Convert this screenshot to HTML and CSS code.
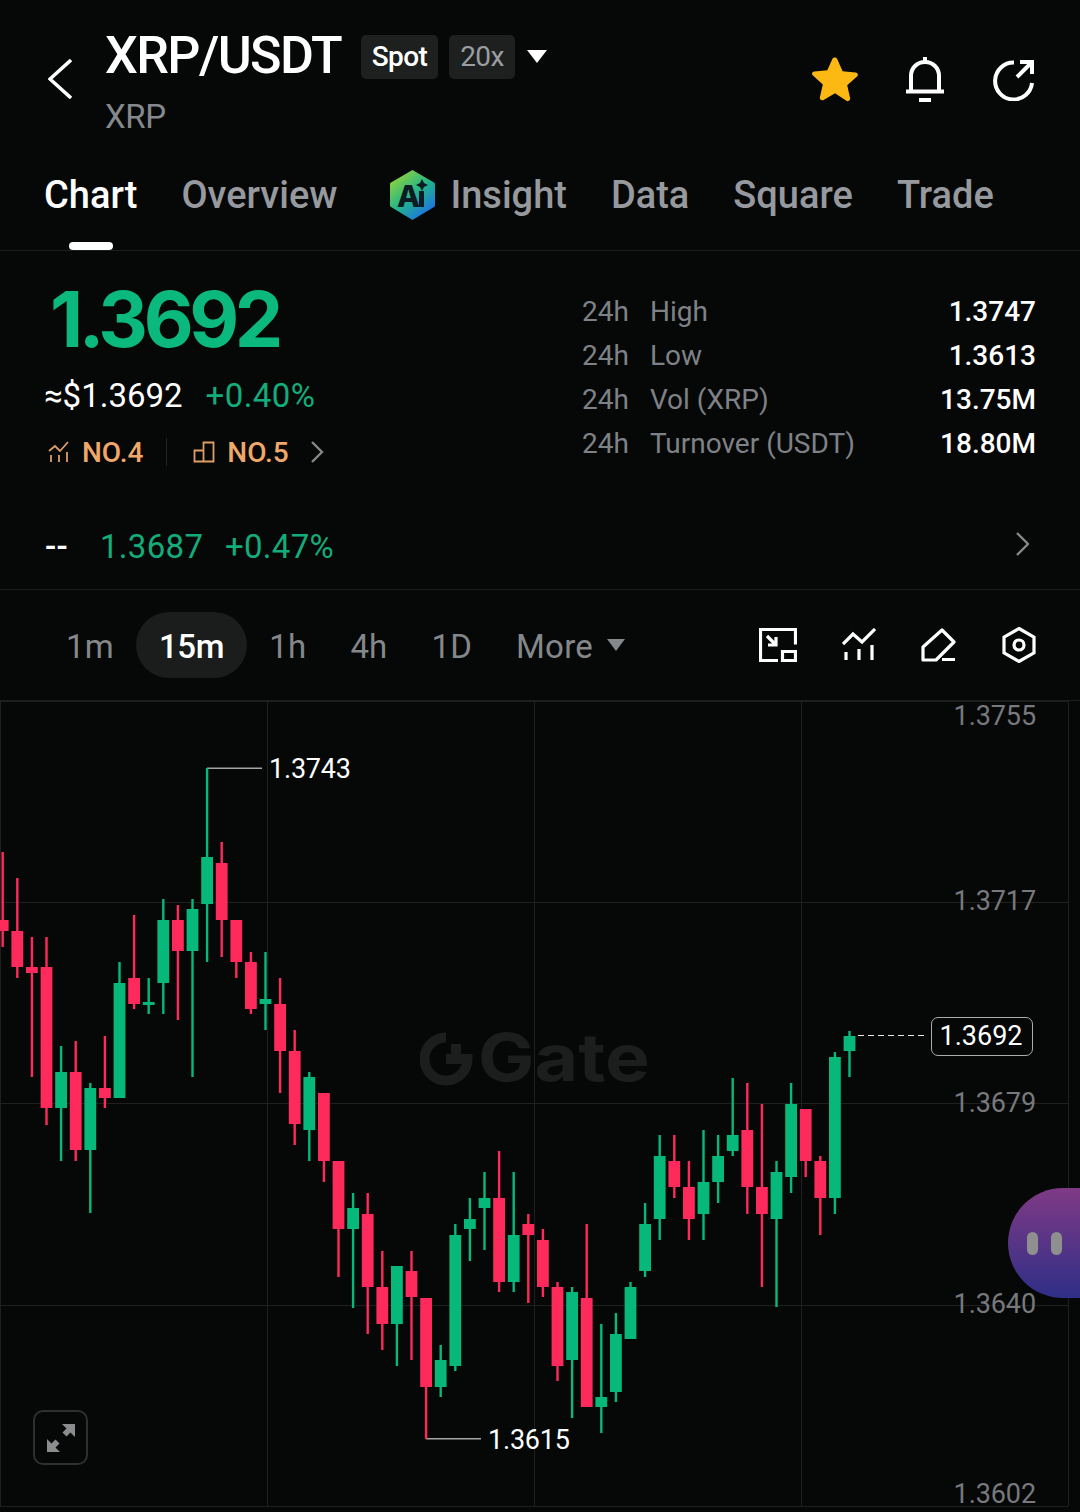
FILE: index.html
```html
<!DOCTYPE html>
<html lang="en">
<head>
<meta charset="UTF-8" />
<meta name="viewport" content="width=device-width, initial-scale=1" />
<title>XRP/USDT</title>
<link rel="stylesheet" href="styles.css">
</head>
<body>
<div class="page">

  <div class="top-bar">
    <svg class="back-icon" width="24" height="40" viewBox="0 0 24 40"><polyline points="23,1 2,20 23,39" /></svg>
    <div class="pair">
      <div class="pair-line">
        <span class="pair-name">XRP/USDT</span>
        <span class="tag tag-spot">Spot</span>
        <span class="tag tag-lev">20x</span>
        <span class="caret caret-lg"></span>
      </div>
      <div class="pair-sub">XRP</div>
    </div>
    <div class="top-actions">
      <svg class="star-icon" width="48" height="46" viewBox="0 0 48 46"><path d="M24 1.500c1 0 1.800.6 2.300 1.700l5.300 12 13 1.300c2.300.2 3 2.700 1.400 4.100l-9.800 8.700 2.900 12.800c.5 2.200-1.800 3.800-3.700 2.700L24 37.200l-11.400 6.700c-1.900 1.100-4.200-.5-3.700-2.700l2.900-12.800L2 19.600C.3 18.200 1.100 15.700 3.300 15.500l13-1.300 5.400-12C22.200 2.100 23 1.500 24 1.500z" fill="#fcb813"/></svg>
      <svg width="40" height="46" viewBox="0 0 40 46" class="line-icon"><path d="M1 35.500h38M6 35.500V20C6 12 12 6 20 6s14 6 14 14v15.500M20 6V1M14 44h12"/></svg>
      <svg width="42" height="42" viewBox="0 0 42 42" class="line-icon share-icon"><path d="M39 24A18.500 18.500 0 1 1 21 3.500M24 18L38 4M27 3h12v12"/></svg>
    </div>
  </div>

  <div class="tabs">
    <span class="tab tab-active">Chart</span>
    <span class="tab">Overview</span>
    <span class="tab tab-ai">
      <svg width="47" height="52" viewBox="0 0 47 52">
        <defs>
          <linearGradient id="aiGrad" x1="0.15" y1="0.1" x2="0.8" y2="0.95">
            <stop offset="0" stop-color="#8ad23f"/>
            <stop offset="0.5" stop-color="#22b58a"/>
            <stop offset="1" stop-color="#1d6fe8"/>
          </linearGradient>
        </defs>
        <path d="M23.500 1L45 13.500a2 2 0 0 1 1 2V36a2 2 0 0 1-1 2L23.500 51 2 38a2 2 0 0 1-1-2V15.500a2 2 0 0 1 1-2z" fill="url(#aiGrad)"/>
        <text x="8" y="38" class="ai-letter">A</text>
        <rect x="30" y="22" width="5" height="16" fill="#0c1c22"/>
        <path d="M33 10l2 4 4 2-4 2-2 4-2-4-4-2 4-2z" fill="#0c1c22"/>
      </svg>
      Insight
    </span>
    <span class="tab">Data</span>
    <span class="tab">Square</span>
    <span class="tab">Trade</span>
    <span class="tab-marker"></span>
  </div>

  <div class="summary">
    <div class="summary-left">
      <div class="last-price">1.3692</div>
      <div class="price-line">
        <span class="usd">≈$1.3692</span>
        <span class="change">+0.40%</span>
      </div>
      <div class="rank-line">
        <svg width="22" height="22" viewBox="0 0 22 22" class="rank-icon"><path d="M1 10l6-5 5 5 8-9M3 14v7M11 14v7M19 11v10"/></svg>
        <span class="rank">NO.4</span>
        <span class="rank-sep"></span>
        <svg width="22" height="22" viewBox="0 0 22 22" class="rank-icon"><path d="M1.500 9.500h9v11h-9zM10.500 20.500V1.500h10v19h-10"/></svg>
        <span class="rank">NO.5</span>
        <svg width="14" height="22" viewBox="0 0 14 22" class="chevron"><polyline points="2,1 12,11 2,21"/></svg>
      </div>
    </div>
    <div class="stats">
      <div class="stat"><span class="stat-h">24h</span><span class="stat-name">High</span><span class="stat-val">1.3747</span></div>
      <div class="stat"><span class="stat-h">24h</span><span class="stat-name">Low</span><span class="stat-val">1.3613</span></div>
      <div class="stat"><span class="stat-h">24h</span><span class="stat-name">Vol (XRP)</span><span class="stat-val">13.75M</span></div>
      <div class="stat"><span class="stat-h">24h</span><span class="stat-name">Turnover (USDT)</span><span class="stat-val">18.80M</span></div>
    </div>
  </div>

  <div class="index-row">
    <span class="dashes">--</span>
    <span class="index-price">1.3687</span>
    <span class="index-change">+0.47%</span>
    <svg width="14" height="24" viewBox="0 0 14 24" class="chevron index-chevron"><polyline points="2,1 13,12 2,23"/></svg>
  </div>

  <div class="toolbar">
    <span class="period">1m</span>
    <span class="period period-active">15m</span>
    <span class="period">1h</span>
    <span class="period">4h</span>
    <span class="period">1D</span>
    <span class="period period-more">More<span class="caret caret-sm"></span></span>
    <div class="tools">
      <svg width="38" height="34" viewBox="0 0 38 34" class="line-icon thin"><path d="M19 32.500H1.500V1.500h35v15M8 8l9 9M17 9v8H9M23.500 23.500h13v9h-13z"/></svg>
      <svg width="34" height="34" viewBox="0 0 34 34" class="line-icon thin"><path d="M1 16l10-10 9 8L33 1M4 24v8M17 21v11M30 17v15"/></svg>
      <svg width="36" height="34" viewBox="0 0 36 34" class="line-icon thin round"><path d="M21 2l12 12-18 18H2V19zM21 31.500h13"/></svg>
      <svg width="34" height="36" viewBox="0 0 34 36" class="line-icon thin"><path d="M17 1.500l15 8.700v15.600l-15 8.700-15-8.700V10.200z"/><circle cx="17" cy="18" r="5"/></svg>
    </div>
  </div>

  <div class="chart">
    <svg id="chartSvg" class="chart-svg" width="1080" height="806" viewBox="0 701 1080 806"></svg>

    <div class="watermark">
      <svg width="54" height="54" viewBox="0 0 54 54"><path d="M26 5.500A21.500 21.500 0 1 0 47.500 27H26" class="wm-ring"/><rect x="31" y="12" width="10" height="13" fill="#1c1d1d"/></svg>
      <span class="wm-text">Gate</span>
    </div>

    <span class="axis-label axis-1">1.3755</span>
    <span class="axis-label axis-2">1.3717</span>
    <span class="axis-label axis-3">1.3679</span>
    <span class="axis-label axis-4">1.3640</span>
    <span class="axis-label axis-5">1.3602</span>

    <span class="mark mark-high">1.3743</span>
    <span class="mark mark-low">1.3615</span>
    <span class="now-price">1.3692</span>

    <div class="assistant"><span class="eye"></span><span class="eye"></span></div>

    <div class="expand">
      <svg width="30" height="30" viewBox="0 0 30 30"><path d="M29 1v13l-4.500-4.500-4 4-4-4 4-4L16 1zM1 29V16l4.500 4.500 4-4 4 4-4 4L14 29z" fill="#8a8c8d"/></svg>
    </div>
  </div>

</div>
<script src="chart.js"></script>
</body>
</html>
```

FILE: styles.css
```css
* {
  box-sizing: border-box;
}
body {
  margin: 0;
  background: #060707;
  color: white;
  font-family: Roboto, sans-serif;
}
.page {
  width: 1080px;
  height: 1512px;
  overflow: hidden;
}

/* top bar */
.top-bar {
  height: 150px;
  display: flex;
  padding: 0 45px 0 48px;
}
.back-icon {
  margin-top: 59px;
  fill: none;
  stroke: white;
  stroke-width: 3.5;
}
.pair {
  margin-left: 33px;
  padding-top: 25px;
}
.pair-line {
  display: flex;
  align-items: center;
  height: 60px;
}
.pair-name {
  font-size: 52px;
  font-weight: 500;
  letter-spacing: -1.6px;
  width: 256px;
}
.tag {
  height: 44px;
  line-height: 44px;
  margin-top: 4px;
  border-radius: 5px;
  background: #1e2020;
  font-size: 28px;
  letter-spacing: -0.6px;
  text-align: center;
}
.tag-spot {
  width: 77px;
  font-weight: 500;
}
.tag-lev {
  width: 66px;
  margin-left: 11px;
  color: #9a9ea2;
}
.caret {
  display: inline-block;
  width: 0;
  height: 0;
  border-left-style: solid;
  border-right-style: solid;
  border-top-style: solid;
  border-left-color: transparent;
  border-right-color: transparent;
}
.caret-lg {
  margin-left: 12px;
  margin-bottom: -3px;
  border-width: 13px 10px 0;
  border-top-color: white;
}
.pair-sub {
  margin-top: 14px;
  font-size: 33px;
  line-height: 36px;
  color: #85898d;
  letter-spacing: -0.4px;
}
.top-actions {
  margin-left: auto;
  padding-top: 56px;
  display: flex;
  align-items: flex-start;
  gap: 48px;
}
.star-icon {
  margin-right: -2px;
}
.share-icon {
  margin-top: 3px;
}
.line-icon {
  fill: none;
  stroke: white;
  stroke-width: 4;
}
.line-icon.thin {
  stroke-width: 3.2;
}
.line-icon.round {
  stroke-linejoin: round;
}

/* tabs */
.tabs {
  position: relative;
  height: 101px;
  padding: 0 0 10px 44px;
  display: flex;
  align-items: center;
  gap: 44px;
  border-bottom: 1px solid #1c1d1d;
}
.tab {
  font-size: 38px;
  font-weight: 500;
  color: #96999d;
  display: flex;
  align-items: center;
  gap: 14px;
}
.tab-active {
  color: white;
}
.tab-ai {
  margin-left: 8px;
}
.ai-letter {
  font-family: Inter, sans-serif;
  font-size: 30px;
  font-weight: 800;
  fill: #0c1c22;
}
.tab-marker {
  position: absolute;
  left: 69px;
  bottom: 0;
  width: 44px;
  height: 8px;
  border-radius: 4px;
  background: white;
}

/* price summary */
.summary {
  height: 238px;
  display: flex;
  justify-content: space-between;
  padding: 0 44px 0 45px;
}
.last-price {
  margin-top: 28px;
  padding-left: 5px;
  font-family: Inter, sans-serif;
  font-size: 77px;
  line-height: 80px;
  font-weight: 700;
  letter-spacing: -4.4px;
  color: #0bb87e;
}
.price-line {
  margin-top: 18px;
  display: flex;
  gap: 23px;
  font-size: 33px;
  line-height: 38px;
  margin-left: -1px;
}
.change {
  color: #13ad7b;
  letter-spacing: 0.4px;
}
.rank-line {
  margin-top: 19px;
  display: flex;
  align-items: center;
  height: 36px;
  font-size: 28px;
  font-weight: 500;
  color: #f0a868;
}
.rank-icon {
  fill: none;
  stroke: #df9d66;
  stroke-width: 1.8;
  margin-left: 3px;
}
.rank {
  margin-left: 12px;
}
.rank-sep {
  width: 1px;
  height: 28px;
  margin: 0 23px;
  background: #222323;
}
.chevron {
  fill: none;
  stroke: #85888b;
  stroke-width: 2.4;
}
.rank-line .chevron {
  margin-left: 21px;
}
.stats {
  width: 454px;
  padding-top: 38px;
}
.stat {
  display: flex;
  height: 44px;
  align-items: center;
  font-size: 28px;
  color: #7e8286;
}
.stat-name {
  margin-left: 21px;
}
.stat-val {
  margin-left: auto;
  color: white;
  font-weight: 500;
}

/* index row */
.index-row {
  height: 101px;
  padding: 14px 51px 0 45px;
  display: flex;
  align-items: center;
  font-size: 33px;
  letter-spacing: 0.3px;
  border-bottom: 1px solid #1c1d1d;
}
.dashes {
  width: 55px;
  font-weight: 500;
}
.index-price {
  color: #13ad7b;
  width: 125px;
}
.index-change {
  color: #13ad7b;
}
.index-chevron {
  margin-left: auto;
  margin-bottom: 4px;
}

/* period toolbar */
.toolbar {
  height: 111px;
  padding: 0 44px;
  display: flex;
  align-items: center;
  border-bottom: 1px solid #1c1d1d;
  font-size: 33px;
  letter-spacing: 0.2px;
  color: #85888b;
}
.period {
  padding: 0 22px;
  height: 66px;
  line-height: 70px;
}
.period-active {
  padding: 0 23px;
  background: #1b1c1c;
  border-radius: 33px;
  color: white;
  font-weight: 500;
  letter-spacing: -0.3px;
}
.period-more {
  display: flex;
  align-items: center;
  padding-top: 4px;
}
.caret-sm {
  margin-left: 14px;
  margin-bottom: 4px;
  border-width: 12px 9px 0;
  border-top-color: #85888b;
}
.tools {
  margin-left: auto;
  display: flex;
  align-items: center;
  gap: 45px;
}

/* chart */
.chart {
  position: relative;
  height: 811px;
}
.chart-svg {
  position: absolute;
  left: 0;
  top: 0;
}
.watermark {
  position: absolute;
  left: 420px;
  top: 331px;
  display: flex;
  align-items: center;
  gap: 4px;
}
.wm-ring {
  fill: none;
  stroke: #1c1d1d;
  stroke-width: 10;
}
.wm-text {
  font-family: Inter, sans-serif;
  font-size: 66px;
  font-weight: 700;
  line-height: 54px;
  margin-top: -4px;
  transform: scaleX(1.14);
  transform-origin: left center;
  color: #1c1d1d;
}
.axis-label {
  position: absolute;
  right: 44px;
  font-size: 27px;
  line-height: 34px;
  letter-spacing: -0.1px;
  color: #77797c;
}
.axis-1 { top: -2px; }
.axis-2 { top: 183px; }
.axis-3 { top: 385px; }
.axis-4 { top: 586px; }
.axis-5 { top: 776px; }
.mark {
  position: absolute;
  font-size: 27px;
  line-height: 34px;
  letter-spacing: -0.2px;
}
.mark-high {
  left: 269px;
  top: 51px;
}
.mark-low {
  left: 488px;
  top: 722px;
}
.now-price {
  position: absolute;
  left: 931px;
  top: 316px;
  width: 102px;
  height: 39px;
  line-height: 37px;
  padding-right: 2px;
  text-align: center;
  font-size: 27px;
  background: #060707;
  border: 1px solid #a9abac;
  border-radius: 7px;
}
.assistant {
  position: absolute;
  right: 0;
  top: 487px;
  width: 72px;
  height: 110px;
  border-radius: 55px 0 0 55px;
  background: linear-gradient(#7f3a85, #2f2f87);
  display: flex;
  align-items: center;
  justify-content: center;
  gap: 13px;
}
.eye {
  width: 11px;
  height: 23px;
  border-radius: 6px;
  background: #8f8f8f;
}
.expand {
  position: absolute;
  left: 33px;
  top: 709px;
  width: 55px;
  height: 55px;
  border: 2px solid #2e3030;
  border-radius: 10px;
  display: flex;
  align-items: center;
  justify-content: center;
}
```

FILE: chart.js
```js
// each candle: high, body top, body bottom, low, up?
const candles = [
  [852, 920, 931, 947, 0], [878, 931, 967, 978, 0], [937, 967, 973, 1077, 0], [937, 967, 1108, 1125, 0],
  [1046, 1072, 1108, 1161, 1], [1041, 1072, 1150, 1161, 0], [1083, 1088, 1150, 1213, 1], [1036, 1088, 1098, 1108, 0],
  [962, 983, 1098, 1098, 1], [915, 978, 1004, 1009, 0], [978, 1002, 1005, 1014, 1], [899, 920, 983, 1014, 1],
  [905, 920, 951, 1020, 0], [899, 909, 951, 1077, 1], [768, 857, 904, 962, 1], [842, 863, 920, 957, 0],
  [920, 920, 962, 978, 0], [952, 962, 1009, 1014, 0], [952, 999, 1004, 1030, 1], [978, 1004, 1051, 1093, 0],
  [1030, 1051, 1124, 1145, 0], [1072, 1077, 1130, 1161, 1], [1093, 1093, 1161, 1182, 0], [1161, 1161, 1229, 1277, 0],
  [1193, 1208, 1229, 1308, 1], [1193, 1214, 1287, 1334, 0], [1251, 1287, 1324, 1350, 0], [1266, 1266, 1324, 1366, 1],
  [1251, 1271, 1297, 1360, 0], [1298, 1298, 1387, 1439, 0], [1345, 1360, 1387, 1397, 1], [1224, 1235, 1366, 1371, 1],
  [1198, 1219, 1229, 1261, 1], [1172, 1198, 1208, 1250, 1], [1151, 1198, 1282, 1292, 0], [1172, 1235, 1282, 1292, 1],
  [1214, 1224, 1235, 1303, 0], [1229, 1240, 1287, 1297, 0], [1282, 1287, 1366, 1381, 0], [1287, 1292, 1360, 1418, 1],
  [1224, 1298, 1407, 1407, 0], [1324, 1397, 1407, 1433, 1], [1313, 1334, 1392, 1402, 1], [1282, 1287, 1339, 1339, 1],
  [1203, 1224, 1271, 1277, 1], [1135, 1156, 1219, 1240, 1], [1135, 1161, 1187, 1198, 0], [1161, 1187, 1219, 1240, 0],
  [1130, 1182, 1214, 1240, 1], [1135, 1156, 1182, 1203, 1], [1078, 1135, 1151, 1156, 1], [1083, 1130, 1187, 1214, 0],
  [1104, 1187, 1214, 1287, 0], [1161, 1172, 1219, 1307, 1], [1083, 1104, 1177, 1193, 1], [1109, 1109, 1161, 1177, 0],
  [1156, 1161, 1198, 1235, 0], [1052, 1057, 1198, 1214, 1], [1031, 1036, 1051, 1077, 1]
];

const svg = document.getElementById('chartSvg');
const GREEN = '#06b97b';
const RED = '#fe2a5b';
const NS = 'http://www.w3.org/2000/svg';

function add(tag, attrs) {
  const el = document.createElementNS(NS, tag);
  for (const k in attrs) el.setAttribute(k, attrs[k]);
  svg.appendChild(el);
}

// grid
[701, 902, 1103, 1305, 1506].forEach(y => {
  add('rect', { x: 0, y: y, width: 1068, height: 1, fill: '#1e1f1f' });
});
[0, 267, 534, 801, 1068].forEach(x => {
  add('rect', { x: x, y: 701, width: 1, height: 805, fill: '#1e1f1f' });
});

// high / low / last markers
add('rect', { x: 207, y: 767.5, width: 55, height: 1.5, fill: '#a4a6a7' });
add('rect', { x: 426, y: 1438, width: 55, height: 1.5, fill: '#a4a6a7' });
add('line', { x1: 858, y1: 1035.5, x2: 926, y2: 1035.5, stroke: '#e8e8e8', 'stroke-width': 1.2, 'stroke-dasharray': '6 4' });

candles.forEach((c, i) => {
  const x = 2.7 + i * 14.6;
  const color = c[4] ? GREEN : RED;
  add('rect', { x: x - 1.2, y: c[0], width: 2.4, height: c[3] - c[0], fill: color });
  add('rect', { x: x - 5.9, y: c[1], width: 11.8, height: c[2] - c[1], fill: color });
});
```
